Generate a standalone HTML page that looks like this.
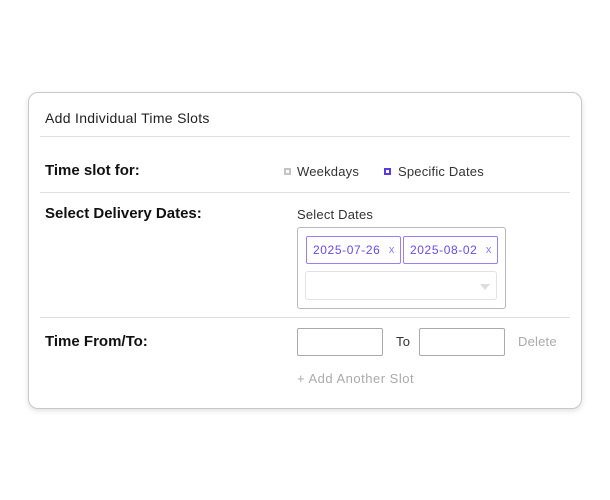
<!DOCTYPE html>
<html><head><style>
*{box-sizing:border-box;margin:0;padding:0}
body{width:610px;height:500px;background:#fff;font-family:"Liberation Sans",sans-serif;position:relative;overflow:hidden}
.a{position:absolute}
.card{left:28px;top:92px;width:554px;height:317px;border:1px solid #c8c8c8;border-radius:10px;box-shadow:0 2px 6px rgba(0,0,0,.12)}
.hr{height:1px;background:#e0e0e0;left:40px;width:530px}
.t{font-size:13px;color:#333;white-space:nowrap;letter-spacing:.2px}
.b{font-size:15px;font-weight:bold;color:#111;white-space:nowrap}
.tag{border:1px solid #9a80f0;border-radius:2px;color:#6a4ae6;font-size:12px;height:28px;line-height:26px;padding-left:6px;top:236px;letter-spacing:.6px}
.tag span{position:absolute;right:5px;color:#8a78e8;font-size:11px}
.inp{border:1px solid #aaa;border-radius:2px;height:28px;top:328px}
</style></head><body>
<div class="a card"></div>
<div class="a t" style="left:45px;top:110px;font-size:14px;color:#222;letter-spacing:.3px">Add Individual Time Slots</div>
<div class="a hr" style="top:136px"></div>
<div class="a b" style="left:45px;top:162px">Time slot for:</div>
<div class="a" style="left:284px;top:168px;width:7px;height:7px;border:2px solid #c4c4c4"></div>
<div class="a t" style="left:297px;top:164px">Weekdays</div>
<div class="a" style="left:384px;top:168px;width:7px;height:7px;border:2px solid #5a3ae6"></div>
<div class="a t" style="left:398px;top:164px">Specific Dates</div>
<div class="a hr" style="top:192px"></div>
<div class="a b" style="left:45px;top:205px">Select Delivery Dates:</div>
<div class="a t" style="left:297px;top:207px">Select Dates</div>
<div class="a" style="left:297px;top:227px;width:209px;height:82px;border:1px solid #b8b8b8;border-radius:3px"></div>
<div class="a tag" style="left:306px;width:95px">2025-07-26<span>x</span></div>
<div class="a tag" style="left:403px;width:95px">2025-08-02<span>x</span></div>
<div class="a" style="left:305px;top:271px;width:192px;height:29px;border:1px solid #e2e2e2;border-radius:3px"></div>
<div class="a" style="left:480px;top:284px;width:0;height:0;border-left:5px solid transparent;border-right:5px solid transparent;border-top:6px solid #ddd"></div>
<div class="a hr" style="top:317px"></div>
<div class="a b" style="left:45px;top:333px">Time From/To:</div>
<div class="a t" style="left:396px;top:334px">To</div>
<div class="a inp" style="left:297px;width:86px"></div>
<div class="a inp" style="left:419px;width:86px"></div>
<div class="a t" style="left:518px;top:334px;color:#aaa">Delete</div>
<div class="a t" style="left:297px;top:371px;color:#aaa;letter-spacing:.5px">+ Add Another Slot</div>
</body></html>
